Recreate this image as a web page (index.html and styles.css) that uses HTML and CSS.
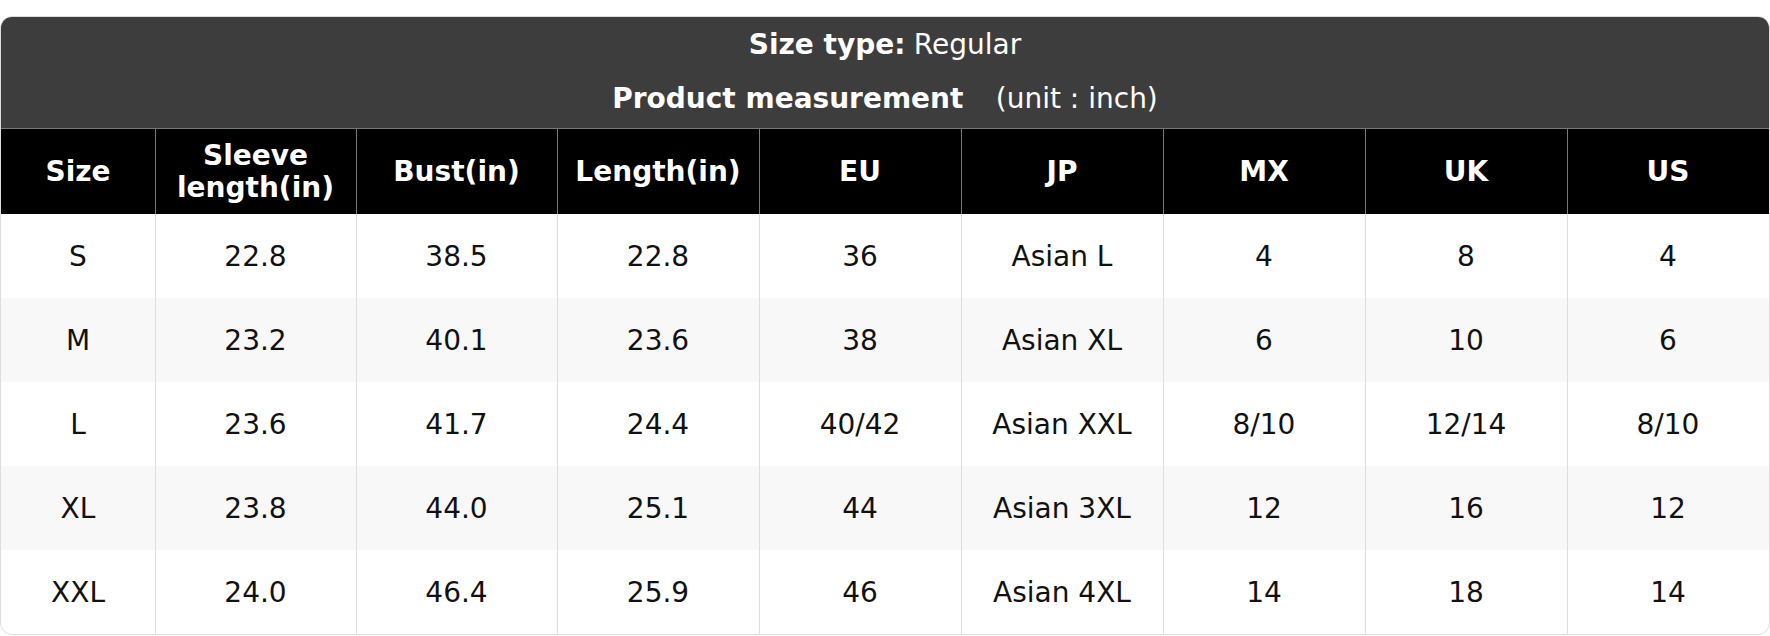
FILE: index.html
```html
<!DOCTYPE html>
<html lang="en">
<head>
<meta charset="utf-8">
<title>Size chart</title>
<link rel="stylesheet" href="styles.css">
</head>
<body>
<div class="page">
  <div class="chart">
    <div class="banner">
      <div class="banner-line"><b>Size type:</b> Regular</div>
      <div class="banner-line"><b>Product measurement</b> <span class="unit">(unit : inch)</span></div>
    </div>
    <table class="sizes">
      <colgroup>
        <col class="c-size">
        <col class="c-narrow">
        <col class="c-narrow">
        <col class="c-wide"><col class="c-wide"><col class="c-wide"><col class="c-wide"><col class="c-wide"><col class="c-wide">
      </colgroup>
      <thead>
        <tr>
          <th>Size</th>
          <th>Sleeve length(in)</th>
          <th>Bust(in)</th>
          <th>Length(in)</th>
          <th>EU</th>
          <th>JP</th>
          <th>MX</th>
          <th>UK</th>
          <th>US</th>
        </tr>
      </thead>
      <tbody>
        <tr><td>S</td><td>22.8</td><td>38.5</td><td>22.8</td><td>36</td><td>Asian L</td><td>4</td><td>8</td><td>4</td></tr>
        <tr><td>M</td><td>23.2</td><td>40.1</td><td>23.6</td><td>38</td><td>Asian XL</td><td>6</td><td>10</td><td>6</td></tr>
        <tr><td>L</td><td>23.6</td><td>41.7</td><td>24.4</td><td>40/42</td><td>Asian XXL</td><td>8/10</td><td>12/14</td><td>8/10</td></tr>
        <tr><td>XL</td><td>23.8</td><td>44.0</td><td>25.1</td><td>44</td><td>Asian 3XL</td><td>12</td><td>16</td><td>12</td></tr>
        <tr><td>XXL</td><td>24.0</td><td>46.4</td><td>25.9</td><td>46</td><td>Asian 4XL</td><td>14</td><td>18</td><td>14</td></tr>
      </tbody>
    </table>
  </div>
</div>
</body>
</html>
```

FILE: styles.css
```css
* { box-sizing: border-box; }

html, body {
  margin: 0;
  padding: 0;
  background: #ffffff;
}

body {
  font-family: "DejaVu Sans", "Liberation Sans", sans-serif;
  font-size: 28px;
  color: #111111;
}

.page {
  padding-top: 16px;
}

.chart {
  width: 1770px;
  border: 1px solid #dddddd;
  border-radius: 12px;
  overflow: hidden;
}

.banner {
  background: #3d3d3d;
  color: #ffffff;
  text-align: center;
  height: 111px;
  display: flex;
  flex-direction: column;
  padding-bottom: 2px;
}

.banner-line {
  flex: 1;
  display: flex;
  align-items: center;
  justify-content: center;
  white-space: nowrap;
}

.banner-line b {
  font-weight: bold;
  margin-right: 0.3em;
}

.unit {
  margin-left: 24px;
}

.sizes {
  width: 100%;
  table-layout: fixed;
  border-collapse: separate;
  border-spacing: 0;
}

.c-size { width: 154px; }
.c-narrow { width: 201px; }
.c-wide { width: 202px; }

.sizes th,
.sizes td {
  padding: 0;
  border: none;
  text-align: center;
  vertical-align: middle;
  font-weight: normal;
}

.sizes thead tr {
  height: 86px;
}

.sizes th {
  background: #000000;
  color: #ffffff;
  font-weight: bold;
  line-height: 1.14;
  padding-top: 2px;
  box-shadow: inset 1px 1px 0 #777777;
}

.sizes th:first-child {
  box-shadow: inset 0 1px 0 #777777;
}

.sizes tbody tr {
  height: 84px;
}

.sizes td {
  color: #111111;
  box-shadow: inset 1px 0 0 #dddddd;
}

.sizes td:first-child {
  box-shadow: none;
}

.sizes tbody tr:nth-child(even) td {
  background: #f8f8f8;
}
```
